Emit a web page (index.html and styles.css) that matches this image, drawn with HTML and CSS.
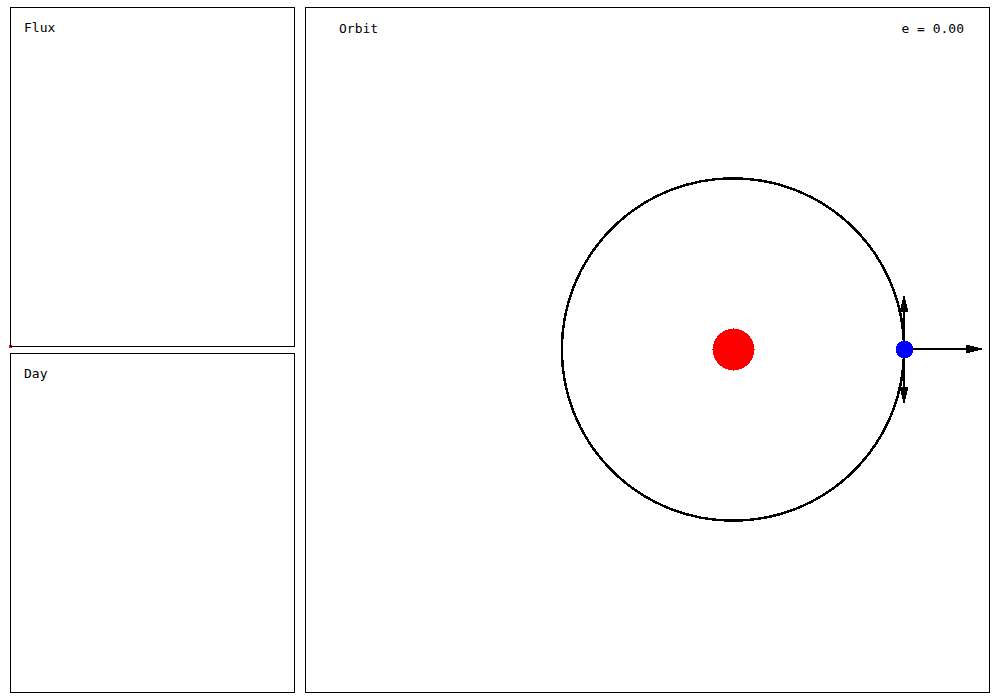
FILE: index.html
```html
<!DOCTYPE html>
<html lang="en">
<head>
<meta charset="utf-8">
<title>Orbit</title>
<link rel="stylesheet" href="styles.css">
</head>
<body>
<main class="screen">
  <div class="plots">
    <section class="panel panel-flux">
      <h2 class="label">Flux</h2>
      <span class="trace"></span>
    </section>
    <section class="panel">
      <h2 class="label">Day</h2>
    </section>
  </div>
  <section class="panel panel-orbit">
    <header class="orbit-head">
      <h2 class="label">Orbit</h2>
      <p class="label">e = 0.00</p>
    </header>
    <svg class="orbit" viewBox="0 0 683 684" shape-rendering="crispEdges" role="img" aria-label="Planet on a circular orbit around a star">
      <circle cx="427" cy="341.5" r="171.2" fill="none" stroke="#000" stroke-width="2.5"/>
      <circle cx="427.5" cy="341.5" r="20.8" fill="#f00"/>
      <path d="M427 320h1v43h-1zM406 341h43v1h-43z" fill="#f00"/>
      <path d="M598 341V300M598 341V383M598 341H664" fill="none" stroke="#000" stroke-width="2"/>
      <path d="M597.5 288H598.5L602.5 304H593.5ZM597.5 395H598.5L602.5 379H593.5ZM676 340.5V341.5L660 345.5V336.5Z" fill="#000"/>
      <circle cx="598.5" cy="341.5" r="8.8" fill="#00f"/>
    </svg>
  </section>
</main>
</body>
</html>
```
FILE: styles.css
```css
* {
  box-sizing: border-box;
}

body {
  margin: 0;
  background: #fff;
  color: #000;
  font-family: "DejaVu Sans Mono", monospace;
}

.screen {
  display: grid;
  grid-template-columns: 285fr 685fr;
  gap: 10px;
  min-height: 100vh;
  padding: 7px 10px;
}

.plots {
  display: grid;
  grid-template-rows: 1fr 1fr;
  gap: 6px;
}

.panel {
  position: relative;
  border: 1px solid #000;
  padding: 12px 13px;
}

.panel-orbit {
  display: grid;
  padding: 0;
}

.label {
  margin: 0;
  font-size: 13px;
  font-weight: 400;
  line-height: 16px;
}

/* Current sample, drawn under the corner of the axes */
.trace {
  position: absolute;
  z-index: -1;
  left: -2px;
  bottom: -2px;
  width: 3px;
  height: 3px;
  background: #f00;
}

.orbit-head,
.orbit {
  grid-area: 1 / 1;
}

.orbit-head {
  display: flex;
  justify-content: space-between;
  align-self: start;
  padding: 13px 25px 0 33px;
}

.orbit {
  width: 100%;
  height: 100%;
}
```
